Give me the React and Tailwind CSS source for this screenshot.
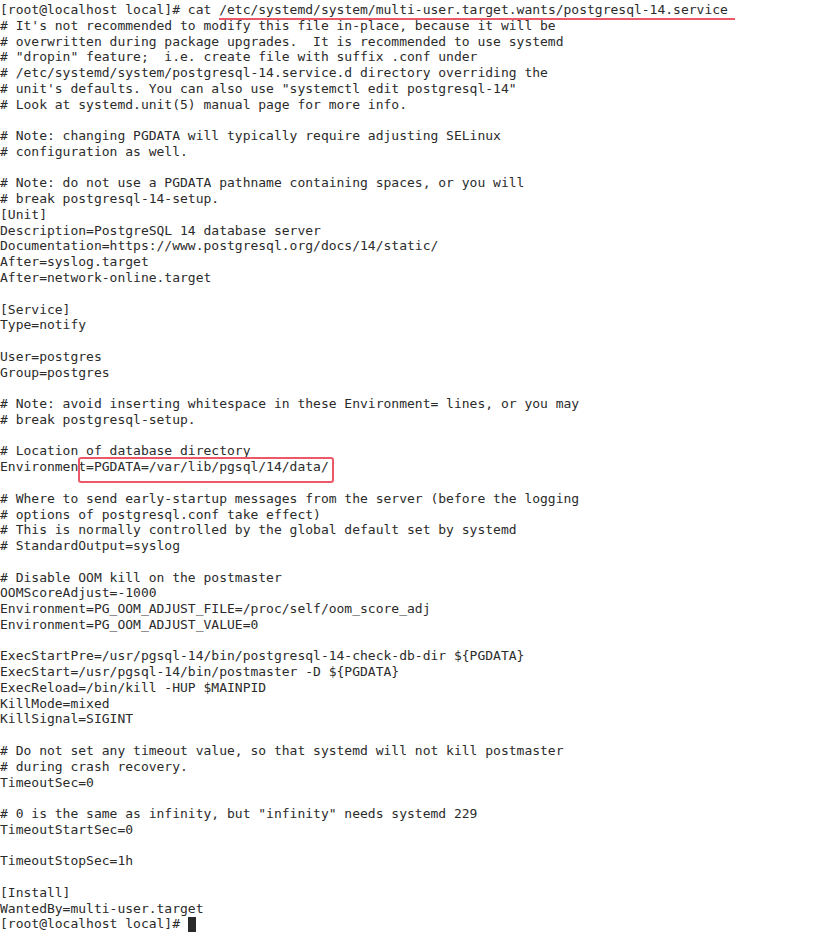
import React from "react";

const lines = [
  "# It's not recommended to modify this file in-place, because it will be",
  "# overwritten during package upgrades.  It is recommended to use systemd",
  '# "dropin" feature;  i.e. create file with suffix .conf under',
  "# /etc/systemd/system/postgresql-14.service.d directory overriding the",
  '# unit\'s defaults. You can also use "systemctl edit postgresql-14"',
  "# Look at systemd.unit(5) manual page for more info.",
  "",
  "# Note: changing PGDATA will typically require adjusting SELinux",
  "# configuration as well.",
  "",
  "# Note: do not use a PGDATA pathname containing spaces, or you will",
  "# break postgresql-14-setup.",
  "[Unit]",
  "Description=PostgreSQL 14 database server",
  "Documentation=https://www.postgresql.org/docs/14/static/",
  "After=syslog.target",
  "After=network-online.target",
  "",
  "[Service]",
  "Type=notify",
  "",
  "User=postgres",
  "Group=postgres",
  "",
  "# Note: avoid inserting whitespace in these Environment= lines, or you may",
  "# break postgresql-setup.",
  "",
  "# Location of database directory",
  "@@ENV",
  "",
  "# Where to send early-startup messages from the server (before the logging",
  "# options of postgresql.conf take effect)",
  "# This is normally controlled by the global default set by systemd",
  "# StandardOutput=syslog",
  "",
  "# Disable OOM kill on the postmaster",
  "OOMScoreAdjust=-1000",
  "Environment=PG_OOM_ADJUST_FILE=/proc/self/oom_score_adj",
  "Environment=PG_OOM_ADJUST_VALUE=0",
  "",
  "ExecStartPre=/usr/pgsql-14/bin/postgresql-14-check-db-dir ${PGDATA}",
  "ExecStart=/usr/pgsql-14/bin/postmaster -D ${PGDATA}",
  "ExecReload=/bin/kill -HUP $MAINPID",
  "KillMode=mixed",
  "KillSignal=SIGINT",
  "",
  "# Do not set any timeout value, so that systemd will not kill postmaster",
  "# during crash recovery.",
  "TimeoutSec=0",
  "",
  '# 0 is the same as infinity, but "infinity" needs systemd 229',
  "TimeoutStartSec=0",
  "",
  "TimeoutStopSec=1h",
  "",
  "[Install]",
  "WantedBy=multi-user.target",
];

function Line({ children }) {
  return <div className="relative h-[15.77px] whitespace-pre">{children || " "}</div>;
}

export default function App() {
  return (
    <div className="min-h-screen w-[813px] bg-white pt-[2px] text-[13px] leading-[15.77px] text-[#2b2b2b] font-['DejaVu_Sans_Mono',monospace] overflow-hidden">
      {/* prompt + command */}
      <Line>
        [root@localhost local]# cat{" "}
        <span className="relative">
          /etc/systemd/system/multi-user.target.wants/postgresql-14.service
          <span className="absolute left-0 right-[-7px] top-[16px] h-[2px] bg-[#ec5867]" />
        </span>
      </Line>

      {lines.map((text, i) =>
        text === "@@ENV" ? (
          <Line key={i}>
            Environment=PGDATA=/var/lib/pgsql/14/data/
            <span className="absolute left-[78px] top-[-2px] h-[26px] w-[256px] rounded-[3px] border-2 border-[#ec5867]" />
          </Line>
        ) : (
          <Line key={i}>{text}</Line>
        )
      )}

      {/* prompt with cursor */}
      <Line>
        [root@localhost local]#{" "}
        <span className="absolute left-[188px] top-[1px] h-[16px] w-[8px] bg-[#2a2a2a]" />
      </Line>
    </div>
  );
}
